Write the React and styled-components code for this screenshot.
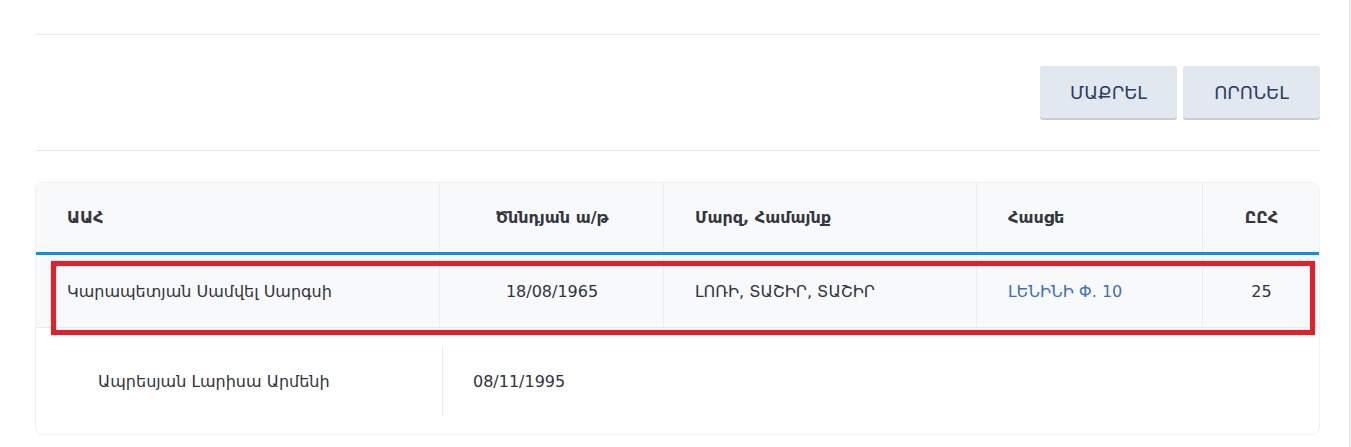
import React from "react";
import styled, { createGlobalStyle } from "styled-components";

const GlobalStyle = createGlobalStyle`
  html, body {
    margin: 0;
    padding: 0;
    background: #f3f3f3;
  }
  body {
    font-family: "DejaVu Sans", "Noto Sans", sans-serif;
    color: #2f3440;
  }
`;

const columns = "403px 224px 313px 226px 1fr";

const people = [
  {
    name: "Կարապետյան Սամվել Սարգսի",
    birth: "18/08/1965",
    region: "ԼՈՌԻ, ՏԱՇԻՐ, ՏԱՇԻՐ",
    address: "ԼԵՆԻՆԻ Փ. 10",
    precinct: "25",
  },
];

const App = () => {
  return (
    <Page>
      <GlobalStyle />
      <Divider />
      <Toolbar>
        <ActionButton>ՄԱՔՐԵԼ</ActionButton>
        <ActionButton>ՈՐՈՆԵԼ</ActionButton>
      </Toolbar>
      <Divider />

      <Table>
        <HeaderRow>
          <HeadCell>ԱԱՀ</HeadCell>
          <HeadCell center>Ծննդյան ա/թ</HeadCell>
          <HeadCell>Մարզ, Համայնք</HeadCell>
          <HeadCell>Հասցե</HeadCell>
          <HeadCell center>ԸԸՀ</HeadCell>
        </HeaderRow>

        {people.map((p) => (
          <SelectedWrap key={p.name}>
            <Row>
              <Cell>{p.name}</Cell>
              <Cell center>{p.birth}</Cell>
              <Cell>{p.region}</Cell>
              <Cell link>{p.address}</Cell>
              <Cell center>{p.precinct}</Cell>
            </Row>
            <Highlight />
          </SelectedWrap>
        ))}

        <SubRow>
          <SubName>Ապրեսյան Լարիսա Արմենի</SubName>
          <SubDate>08/11/1995</SubDate>
        </SubRow>
      </Table>
    </Page>
  );
};

export default App;

export const Page = styled.div`
  background: #fff;
  min-height: 100vh;
  margin-right: 1px;
  border-right: 1px solid #e2e2e2;
  padding: 34px 29px 0 35px;
  box-sizing: border-box;
`;

export const Divider = styled.div`
  height: 1px;
  background: #ececec;
`;

export const Toolbar = styled.div`
  display: flex;
  justify-content: flex-end;
  gap: 6px;
  padding: 31px 0 30px;
`;

export const ActionButton = styled.button`
  width: 137px;
  height: 54px;
  background: #e1e8f0;
  border: none;
  border-bottom: 2px solid #c3cedb;
  border-radius: 3px;
  color: #2c3e63;
  font-family: "DejaVu Sans", "Noto Sans", sans-serif;
  font-size: 18px;
  cursor: pointer;
`;

export const Table = styled.div`
  margin-top: 31px;
  border-radius: 8px;
  border: 1px solid #f1f2f4;
  background: #fff;
`;

export const HeaderRow = styled.div`
  display: grid;
  grid-template-columns: ${columns};
  height: 69px;
  background: #f8f9fb;
  border-bottom: 3px solid #0a8ff2;
  border-radius: 8px 8px 0 0;
`;

export const HeadCell = styled.div`
  display: flex;
  align-items: center;
  justify-content: ${(p) => (p.center ? "center" : "flex-start")};
  padding: 0 30px 0 31px;
  font-size: 16px;
  font-weight: 700;
  color: #333740;
  & + & {
    border-left: 1px solid #eaecef;
  }
`;

export const SelectedWrap = styled.div`
  position: relative;
`;

export const Row = styled.div`
  display: grid;
  grid-template-columns: ${columns};
  height: 72px;
  background: #f8f9fb;
  border-bottom: 1px solid #e8eaee;
`;

export const Cell = styled.div`
  display: flex;
  align-items: center;
  justify-content: ${(p) => (p.center ? "center" : "flex-start")};
  padding: 0 30px 0 31px;
  font-size: 16px;
  color: ${(p) => (p.link ? "#3b6fc6" : "#2f3440")};
  & + & {
    border-left: 1px solid #eaecef;
  }
`;

export const Highlight = styled.div`
  position: absolute;
  left: 15px;
  right: 4px;
  top: 6px;
  bottom: -7px;
  border: 5px solid #ed1c24;
  pointer-events: none;
`;

export const SubRow = styled.div`
  display: flex;
  align-items: center;
  height: 106px;
`;

export const SubName = styled.div`
  width: 344px;
  padding-left: 62px;
  font-size: 16px;
  color: #2f3440;
`;

export const SubDate = styled.div`
  display: flex;
  align-items: center;
  height: 70px;
  padding-left: 30px;
  border-left: 1px solid #eaecef;
  font-size: 16px;
  color: #2f3440;
`;
